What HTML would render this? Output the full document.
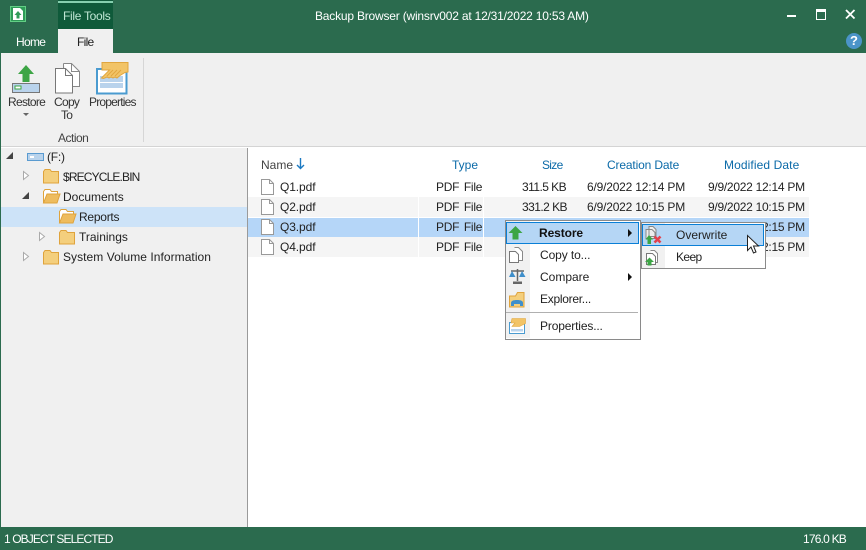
<!DOCTYPE html>
<html><head><meta charset="utf-8"><style>
html,body{margin:0;padding:0}
body{width:866px;height:550px;position:relative;overflow:hidden;background:#fff;font-family:"Liberation Sans",sans-serif;font-size:12px;color:#222}
.a{position:absolute}
.t{position:absolute;white-space:nowrap;line-height:16px;letter-spacing:0}
.h{color:#0b6aa8}
.p{letter-spacing:-.25px;word-spacing:1.5px}
.s{letter-spacing:-.55px}
.c{letter-spacing:-.2px}
.m{letter-spacing:-.27px}
svg{position:absolute;overflow:visible}
</style></head><body>
<div class="a" style="left:0;top:0;width:866px;height:53px;background:#2b6b4e"></div>
<div class="a" style="left:58px;top:0;width:55px;height:29px;background:#0f5a3a"></div>
<div class="a" style="left:58px;top:1px;width:55px;height:2px;background:#85cfae"></div>
<div class="t" style="left:63px;top:8px;color:#bfe6d4;letter-spacing:-.3px">File Tools</div>
<div class="a" style="left:58px;top:29px;width:55px;height:24px;background:#f0f0f0"></div>
<div class="t" style="left:16px;top:34px;color:#fff;letter-spacing:-.7px">Home</div>
<div class="t" style="left:77px;top:34px;color:#222;letter-spacing:-.7px">File</div>
<div class="t" style="left:315px;top:8px;color:#fff;letter-spacing:-.2px">Backup Browser (winsrv002 at 12/31/2022 10:53 AM)</div>
<svg style="left:10px;top:6px" width="17" height="17" viewBox="0 0 17 17"><rect x=".5" y=".5" width="15" height="15" fill="#2f9b58" stroke="#62cf85"/><path d="M3 2h7l3 3v9H3z" fill="#fff"/><path d="M8 5l3.500 4H9.500v3.500h-3V9H4.500z" fill="#2f9b58"/></svg>
<div class="a" style="left:787px;top:15px;width:9px;height:2px;background:#fff"></div>
<div class="a" style="left:816px;top:9px;width:8px;height:7px;border:1px solid #fff;border-top-width:3px"></div>
<svg style="left:845px;top:9px" width="11" height="11"><path d="M1 1l8.500 8.500M9.500 1L1 9.500" stroke="#fff" stroke-width="1.800"/></svg>
<div class="a" style="left:846px;top:33px;width:16px;height:16px;border-radius:50%;background:#4b94c8;color:#fff;font:bold 13px/16px 'Liberation Sans',sans-serif;text-align:center">?</div>

<div class="a" style="left:1px;top:53px;width:865px;height:93px;background:#f0f0f0;border-bottom:1px solid #d4d4d4"></div>
<div class="a" style="left:143px;top:58px;width:1px;height:84px;background:#d6d6d6"></div>
<svg style="left:12px;top:65px" width="28" height="28" viewBox="0 0 28 28"><path d="M14 0l8 9h-4.500v8h-7V9H6z" fill="#3da545"/><rect x=".5" y="18.500" width="27" height="9" fill="#b9d3ec" stroke="#777"/><rect x="3" y="21" width="6" height="3" fill="#fff" stroke="#3da545"/></svg>
<div class="t" style="left:8px;top:94px;letter-spacing:-.7px;color:#333">Restore</div>
<svg style="left:23px;top:113px" width="7" height="4"><path d="M0 0h6L3 3z" fill="#666"/></svg>
<svg style="left:55px;top:63px" width="26" height="31" viewBox="0 0 26 31"><path d="M8.500.5h8l8 8v15h-7" fill="#fff" stroke="#888"/><path d="M16.500.5v8h8" fill="none" stroke="#888"/><path d="M8.500 5v-4.500" stroke="#888"/><path d="M.5 5.500h10l7 7v17.500H.5z" fill="#fff" stroke="#777"/><path d="M10.500 5.500v7h7" fill="none" stroke="#777"/></svg>
<div class="t" style="left:54px;top:94px;letter-spacing:-.7px;color:#333">Copy</div>
<div class="t" style="left:61px;top:107px;letter-spacing:-.7px;color:#333">To</div>
<svg style="left:96px;top:62px" width="33" height="33" viewBox="0 0 33 33"><rect x="1" y="7" width="29.500" height="24.500" fill="#fff" stroke="#4a9bd0" stroke-width="2"/><rect x="4" y="14" width="23" height="6" fill="#b9d3ec"/><rect x="4" y="21" width="23" height="5" fill="#b9d3ec"/><path d="M6 .5h26v9.500l-3 .5-5 3-3 2.500-2-1-2 1-2-1-2 1-2-1-3.500 1.500-2-.5 8-8H6z" fill="#f2c467" stroke="#e0a63f"/><path d="M15 14l6-6M19 14l6-6M11 14l6-6" stroke="#e0a63f" fill="none"/></svg>
<div class="t" style="left:89px;top:94px;letter-spacing:-.8px;color:#333">Properties</div>
<div class="t" style="left:58px;top:130px;letter-spacing:-.5px;color:#444">Action</div>

<div class="a" style="left:0;top:53px;width:1px;height:474px;background:#2b6b4e"></div>
<div class="a" style="left:1px;top:148px;width:246px;height:379px;background:#f0f0f0"></div>
<div class="a" style="left:247px;top:148px;width:1px;height:379px;background:#9a9a9a"></div>
<div class="a" style="left:1px;top:207px;width:246px;height:20px;background:#cde3f8"></div>

<svg style="left:6px;top:152px" width="8" height="8"><path d="M7 0v7H0z" fill="#444"/></svg>
<svg style="left:27px;top:153px" width="18" height="9"><rect x=".5" y=".5" width="16" height="7" fill="#b9d3ec" stroke="#5a9bd0"/><rect x="3" y="3" width="4" height="2" fill="#fff"/></svg>
<div class="t" style="left:47px;top:149px;letter-spacing:-.2px">(F:)</div>

<svg style="left:23px;top:171px" width="7" height="10"><path d="M.5.500l5 4-5 4z" fill="#fff" stroke="#aaa"/></svg>
<svg style="left:43px;top:168px" width="16" height="16"><path d="M.5 15V3.500L2 1.500h5l1.500 2H15.500V15z" fill="#f4cf7d" stroke="#dfa33c"/></svg>
<div class="t" style="left:63px;top:169px;letter-spacing:-.85px">$RECYCLE.BIN</div>

<svg style="left:22px;top:192px" width="8" height="8"><path d="M7 0v7H0z" fill="#444"/></svg>
<svg style="left:43px;top:188px" width="18" height="16"><path d="M.5 15V3.500L2 1.500h5l1.500 2H14.500V6H5z" fill="#fff" stroke="#dfa33c"/><path d="M.5 15L4 6h13l-3 9z" fill="#eebc5e" stroke="#dfa33c"/></svg>
<div class="t" style="left:63px;top:189px">Documents</div>

<svg style="left:59px;top:208px" width="18" height="16"><path d="M.5 15V3.500L2 1.500h5l1.500 2H14.500V6H5z" fill="#fff" stroke="#dfa33c"/><path d="M.5 15L4 6h13l-3 9z" fill="#eebc5e" stroke="#dfa33c"/></svg>
<div class="t" style="left:79px;top:209px;letter-spacing:-.25px">Reports</div>

<svg style="left:39px;top:232px" width="7" height="10"><path d="M.5.500l5 4-5 4z" fill="#fff" stroke="#aaa"/></svg>
<svg style="left:59px;top:229px" width="16" height="16"><path d="M.5 15V3.500L2 1.500h5l1.500 2H15.500V15z" fill="#f4cf7d" stroke="#dfa33c"/></svg>
<div class="t" style="left:79px;top:229px">Trainings</div>

<svg style="left:23px;top:252px" width="7" height="10"><path d="M.5.500l5 4-5 4z" fill="#fff" stroke="#aaa"/></svg>
<svg style="left:43px;top:249px" width="16" height="16"><path d="M.5 15V3.500L2 1.500h5l1.500 2H15.500V15z" fill="#f4cf7d" stroke="#dfa33c"/></svg>
<div class="t" style="left:63px;top:249px;letter-spacing:.05px">System Volume Information</div>

<div class="t" style="left:261px;top:157px;color:#444">Name</div>
<svg style="left:296px;top:158px" width="9" height="12"><path d="M4.500 0v10M1 7l3.500 3.500L8 7" fill="none" stroke="#1c7ac2" stroke-width="1.400"/></svg>
<div class="t h" style="left:452px;top:157px">Type</div>
<div class="t h" style="left:542px;top:157px;letter-spacing:-.7px">Size</div>
<div class="t h" style="left:607px;top:157px;letter-spacing:-.15px">Creation Date</div>
<div class="t h" style="left:724px;top:157px;letter-spacing:.1px">Modified Date</div>

<div class="a" style="left:248px;top:197px;width:561px;height:20px;background:#f5f5f5"></div>
<div class="a" style="left:248px;top:218px;width:561px;height:19px;background:#b5d6f8"></div>
<div class="a" style="left:248px;top:237px;width:561px;height:20px;background:#f5f5f5"></div>
<div class="a" style="left:418px;top:197px;width:1px;height:60px;background:#fff"></div>
<div class="a" style="left:483px;top:197px;width:1px;height:60px;background:#fff"></div>

<svg style="left:261px;top:179px" width="13" height="16"><path d="M.5.500h8l4 4v11H.500z" fill="#fff" stroke="#999"/><path d="M8.500.500v4h4" fill="none" stroke="#999"/></svg>
<svg style="left:261px;top:199px" width="13" height="16"><path d="M.5.500h8l4 4v11H.500z" fill="#fff" stroke="#999"/><path d="M8.500.500v4h4" fill="none" stroke="#999"/></svg>
<svg style="left:261px;top:219px" width="13" height="16"><path d="M.5.500h8l4 4v11H.500z" fill="#fff" stroke="#999"/><path d="M8.500.500v4h4" fill="none" stroke="#999"/></svg>
<svg style="left:261px;top:239px" width="13" height="16"><path d="M.5.500h8l4 4v11H.500z" fill="#fff" stroke="#999"/><path d="M8.500.500v4h4" fill="none" stroke="#999"/></svg>

<div class="t" style="left:280px;top:179px;letter-spacing:-.1px">Q1.pdf</div><div class="t p" style="left:436px;top:179px">PDF File</div><div class="t s" style="left:522px;top:179px">311.5 KB</div><div class="t c" style="left:587px;top:179px">6/9/2022 12:14 PM</div><div class="t m" style="left:708px;top:179px">9/9/2022 12:14 PM</div>
<div class="t" style="left:280px;top:199px;letter-spacing:-.1px">Q2.pdf</div><div class="t p" style="left:436px;top:199px">PDF File</div><div class="t s" style="left:522px;top:199px">331.2 KB</div><div class="t c" style="left:587px;top:199px">6/9/2022 10:15 PM</div><div class="t m" style="left:708px;top:199px">9/9/2022 10:15 PM</div>
<div class="t" style="left:280px;top:219px;letter-spacing:-.1px">Q3.pdf</div><div class="t p" style="left:436px;top:219px">PDF File</div><div class="t s" style="left:522px;top:219px">176.0 KB</div><div class="t c" style="left:587px;top:219px">6/9/2022 12:15 PM</div><div class="t m" style="left:708px;top:219px">9/9/2022 12:15 PM</div>
<div class="t" style="left:280px;top:239px;letter-spacing:-.1px">Q4.pdf</div><div class="t p" style="left:436px;top:239px">PDF File</div><div class="t s" style="left:522px;top:239px">201.4 KB</div><div class="t c" style="left:587px;top:239px">6/9/2022 12:15 PM</div><div class="t m" style="left:708px;top:239px">9/9/2022 12:15 PM</div>

<div class="a" style="left:505px;top:220px;width:134px;height:118px;background:#fff;border:1px solid #8a8a8a"></div>
<div class="a" style="left:506px;top:221px;width:24px;height:117px;background:#f1f1f1"></div>
<div class="a" style="left:506px;top:222px;width:133px;height:22px;background:#b5d6f5;border:1px solid #0a7fd6;box-sizing:border-box"></div>
<svg style="left:508px;top:226px" width="15" height="14"><path d="M7.500 0l7 7H10.500v6.500h-6V7H.5z" fill="#3da545"/></svg>
<div class="t" style="left:539px;top:225px;font-weight:bold;letter-spacing:-.1px;color:#111">Restore</div>
<svg style="left:628px;top:229px" width="5" height="8"><path d="M0 0l4 4-4 4z" fill="#111"/></svg>
<svg style="left:509px;top:247px" width="15" height="16"><path d="M5.500.5h4l4 4v9H9" fill="#fff" stroke="#888"/><path d="M.5 4.500h6l3 3v8h-9z" fill="#fff" stroke="#777"/></svg>
<div class="t" style="left:540px;top:247px;letter-spacing:-.1px">Copy to...</div>
<svg style="left:509px;top:268px" width="17" height="17"><path d="M8.500 1v12M2 3h13" stroke="#666" stroke-width="1.500" fill="none"/><rect x="4" y="13.500" width="9" height="2.500" fill="#666"/><path d="M0 9h6.500L3 3zM10 9h6.500L13 3z" fill="#3f8fcb"/></svg>
<div class="t" style="left:540px;top:269px">Compare</div>
<svg style="left:628px;top:273px" width="5" height="8"><path d="M0 0l4 4-4 4z" fill="#111"/></svg>
<svg style="left:509px;top:292px" width="16" height="16"><path d="M.5 15V4h6l2-3.500h6.500V15z" fill="#f4cf7d" stroke="#dfa33c"/><path d="M2 14v-3c0-2 2-3 6-3s6 1 6 3v3h-3v-2H5v2z" fill="#3f8fcb"/></svg>
<div class="t" style="left:540px;top:291px;letter-spacing:-.28px">Explorer...</div>
<div class="a" style="left:506px;top:312px;width:132px;height:1px;background:#b0b0b0"></div>
<svg style="left:509px;top:318px" width="17" height="17"><rect x=".5" y="4.500" width="15" height="11" fill="#fff" stroke="#4a9bd0"/><rect x="2" y="11" width="12" height="2.500" fill="#b9d3ec"/><path d="M3 .5h13.500v5l-6 3H3l3-3.500H2z" fill="#f2c467" stroke="#e0a63f" stroke-width=".6"/></svg>
<div class="t" style="left:540px;top:318px;letter-spacing:-.15px">Properties...</div>

<div class="a" style="left:641px;top:222px;width:123px;height:45px;background:#fff;border:1px solid #8a8a8a"></div>
<div class="a" style="left:642px;top:223px;width:23px;height:45px;background:#f1f1f1"></div>
<div class="a" style="left:642px;top:224px;width:122px;height:22px;background:#b5d6f5;border:1px solid #0a7fd6;box-sizing:border-box"></div>
<svg style="left:645px;top:226px" width="17" height="18"><path d="M4 .5h4l3 3v7H4zM1 3.500h6l3 3v6H1z" fill="#eee" stroke="#888"/><path d="M4 9l4 4.500H6V18H2.500v-4.500H.5z" fill="#3da545"/><path d="M9.500 10.500l6 6M15.500 10.500l-6 6" stroke="#e4404c" stroke-width="2.600"/></svg>
<div class="t" style="left:676px;top:227px">Overwrite</div>
<svg style="left:645px;top:250px" width="14" height="16"><path d="M5.500.5h4l3 3v9H9" fill="#fff" stroke="#888"/><path d="M1.500 3.500h6l3 3v8h-9z" fill="#fff" stroke="#777"/><path d="M4.500 7.500l4.500 4.500H6.500v3.500h-4V12H0z" fill="#3da545"/></svg>
<div class="t" style="left:676px;top:249px;letter-spacing:-.6px">Keep</div>
<svg style="left:747px;top:235px" width="13" height="20"><path d="M.5.500v15l3.500-3.500 2.500 6 2.500-1-2.500-6h5z" fill="#fff" stroke="#222"/></svg>

<div class="a" style="left:0;top:527px;width:866px;height:23px;background:#2b6b4e"></div>
<div class="t" style="left:4px;top:531px;color:#fff;letter-spacing:-.9px">1 OBJECT SELECTED</div>
<div class="t" style="left:803px;top:531px;color:#fff;letter-spacing:-.8px">176.0 KB</div>
</body></html>
